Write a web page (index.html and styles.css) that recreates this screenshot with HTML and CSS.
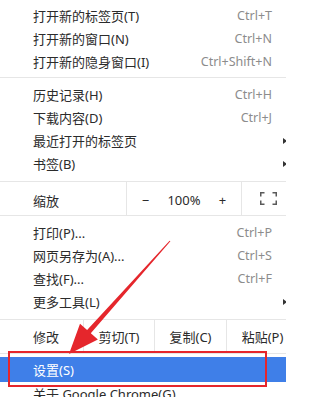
FILE: index.html
```html
<!DOCTYPE html>
<html lang="zh-CN">
<head>
<meta charset="utf-8">
<title>Chrome 菜单</title>
<link rel="stylesheet" href="styles.css">
</head>
<body>
<div class="menu">
  <div class="item"><span class="label">打开新的标签页(T)</span><span class="key">Ctrl+T</span></div>
  <div class="item"><span class="label">打开新的窗口(N)</span><span class="key">Ctrl+N</span></div>
  <div class="item"><span class="label">打开新的隐身窗口(I)</span><span class="key">Ctrl+Shift+N</span></div>
  <div class="sep"></div>
  <div class="item"><span class="label">历史记录(H)</span><span class="key">Ctrl+H</span></div>
  <div class="item"><span class="label">下载内容(D)</span><span class="key">Ctrl+J</span></div>
  <div class="item"><span class="label">最近打开的标签页</span><span class="sub"></span></div>
  <div class="item"><span class="label">书签(B)</span><span class="sub"></span></div>
  <div class="zoomrow">
    <div class="zcell zlabel">缩放</div>
    <div class="zcell zctrl"><span class="zbtn">−</span><span>100%</span><span class="zbtn">+</span></div>
    <div class="zcell zfull">
      <svg class="fs" width="17" height="13" viewBox="0 0 17 13"><path d="M0.75 4.5V0.75H4.5M12.5 0.75H16.25V4.5M0.75 8.5V12.25H4.5M12.5 12.25H16.25V8.5" stroke="#5a5a5a" stroke-width="1.5" fill="none"/></svg>
    </div>
  </div>
  <div class="item"><span class="label">打印(P)...</span><span class="key">Ctrl+P</span></div>
  <div class="item"><span class="label">网页另存为(A)...</span><span class="key">Ctrl+S</span></div>
  <div class="item"><span class="label">查找(F)...</span><span class="key">Ctrl+F</span></div>
  <div class="item"><span class="label">更多工具(L)</span><span class="sub"></span></div>
  <div class="editrow">
    <div class="ecell first">修改</div>
    <div class="ecell">剪切(T)</div>
    <div class="ecell">复制(C)</div>
    <div class="ecell">粘贴(P)</div>
  </div>
  <div class="item active"><span class="label">设置(S)</span></div>
  <div class="item"><span class="label">关于 Google Chrome(G)</span></div>
</div>
<svg class="arrow" width="286" height="397" viewBox="0 0 286 397">
  <polygon points="169.6,240.7 170.4,241.3 90.8,333.3 97.9,339.6 69,354 80,323.7 87.1,330" fill="#e5262c"/>
</svg>
<div class="redbox"></div>
</body>
</html>
```

FILE: styles.css
```css
html, body {
  margin: 0;
  padding: 0;
  overflow: hidden;
  background: #fff;
}

body {
  width: 286px;
  height: 397px;
  position: relative;
}

.menu {
  width: 298px;
  padding-top: 4px;
  font-family: "Noto Sans", "Noto Sans CJK SC", sans-serif;
  font-size: 13px;
  color: #2b2b2b;
}

.item {
  height: 23px;
  display: flex;
  align-items: center;
  padding: 0 26px 0 33px;
  white-space: nowrap;
}

.key {
  margin-left: auto;
  color: #8c8c8c;
  font-size: 12.5px;
}

.sub {
  margin-left: auto;
  margin-right: -15px;
  width: 0;
  height: 0;
  border-left: 4px solid #333;
  border-top: 3.5px solid transparent;
  border-bottom: 3.5px solid transparent;
}

.sep {
  height: 1px;
  background: #e6e6e6;
  margin: 4px 0 5px;
}

.zoomrow {
  display: grid;
  grid-template-columns: 126px 115px 1fr;
  height: 33px;
  margin: 6px 0 5px;
  border-top: 1px solid #e6e6e6;
  border-bottom: 1px solid #e6e6e6;
}

.zcell {
  display: flex;
  align-items: center;
  padding-top: 3px;
  box-sizing: border-box;
}

.zlabel {
  padding-left: 33px;
}

.zctrl {
  justify-content: center;
  gap: 18px;
  border-left: 1px solid #e6e6e6;
}

.zbtn {
  width: 8px;
  text-align: center;
}

.zfull {
  border-left: 1px solid #e6e6e6;
  padding-left: 18px;
}

.fs {
  margin-top: -4px;
}

.editrow {
  display: grid;
  grid-template-columns: 83px 71px 72px 1fr;
  height: 33px;
  margin-top: 6px;
  border-top: 1px solid #e6e6e6;
  border-bottom: 1px solid #e6e6e6;
}

.ecell {
  display: flex;
  align-items: center;
  justify-content: center;
  border-left: 1px solid #e6e6e6;
  white-space: nowrap;
}

.ecell.first {
  justify-content: flex-start;
  padding-left: 33px;
  border-left: none;
}

.item.active {
  margin-top: 3px;
  height: 25px;
  background: #3f7fe8;
  color: #fff;
}

.arrow {
  position: absolute;
  left: 0;
  top: 0;
  pointer-events: none;
}

.redbox {
  position: absolute;
  left: 8px;
  top: 351px;
  width: 259px;
  height: 36px;
  box-sizing: border-box;
  border: 2.5px solid #e5262c;
}
```
